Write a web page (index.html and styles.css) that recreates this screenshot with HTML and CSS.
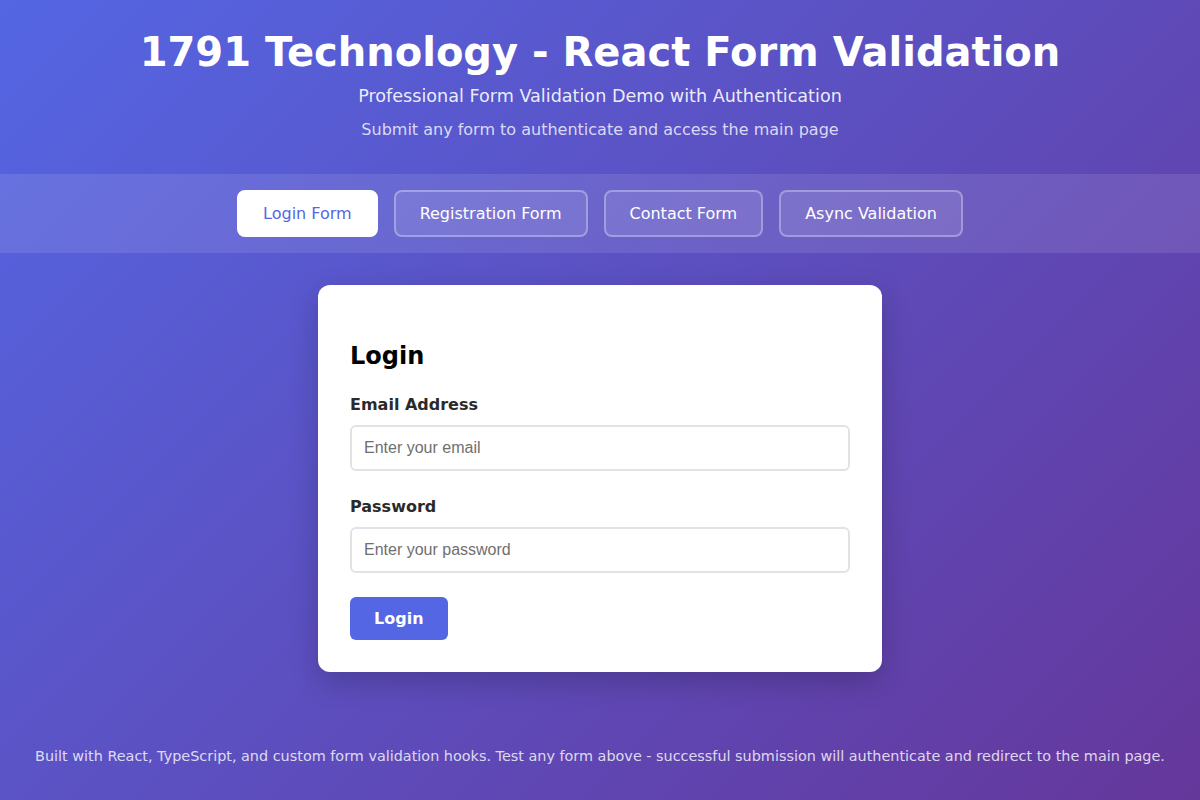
FILE: index.html
```html
<!DOCTYPE html>
<html lang="en">
<head>
<meta charset="utf-8">
<title>1791 Technology - React Form Validation</title>
<link rel="stylesheet" href="styles.css">
</head>
<body>
<div class="app">
  <header class="header">
    <h1 class="title">1791 Technology - React Form Validation</h1>
    <p class="subtitle">Professional Form Validation Demo with Authentication</p>
    <p class="hint">Submit any form to authenticate and access the main page</p>
  </header>
  <nav class="tabs">
    <button class="tab active">Login Form</button>
    <button class="tab">Registration Form</button>
    <button class="tab">Contact Form</button>
    <button class="tab">Async Validation</button>
  </nav>
  <main class="main">
    <form class="card">
      <h2 class="card-title">Login</h2>
      <div class="field">
        <label class="label" for="email">Email Address</label>
        <input class="input" id="email" type="email" placeholder="Enter your email">
      </div>
      <div class="field">
        <label class="label" for="password">Password</label>
        <input class="input" id="password" type="password" placeholder="Enter your password">
      </div>
      <button class="submit" type="button">Login</button>
    </form>
  </main>
  <footer class="footer">
    Built with React, TypeScript, and custom form validation hooks. Test any form above - successful submission will authenticate and redirect to the main page.
  </footer>
</div>
</body>
</html>
```
FILE: styles.css
```css
* { box-sizing: border-box; }
html, body { margin: 0; padding: 0; }
body {
  font-family: "DejaVu Sans", sans-serif;
  background: linear-gradient(135deg, #5466e3 0%, #65379b 100%);
  min-height: 100vh;
  color: #fff;
}
.app {
  min-height: 100vh;
  display: flex;
  flex-direction: column;
}
.header {
  text-align: center;
  padding: 29px 20px 35px;
}
.title {
  margin: 0 0 11px;
  font-size: 40px;
  font-weight: bold;
  line-height: normal;
  color: #fff;
}
.subtitle {
  margin: 0 0 14px;
  font-size: 17.6px;
  color: rgba(255, 255, 255, 0.9);
}
.hint {
  margin: 0;
  font-size: 16px;
  color: rgba(255, 255, 255, 0.78);
}
.tabs {
  display: flex;
  justify-content: center;
  gap: 16px;
  padding: 16px;
  background: rgba(255, 255, 255, 0.1);
}
.tab {
  font-family: "DejaVu Sans", sans-serif;
  font-size: 16px;
  line-height: normal;
  padding: 12px 24px;
  border: 2px solid rgba(255, 255, 255, 0.3);
  border-radius: 8px;
  background: rgba(255, 255, 255, 0.1);
  color: #fff;
  cursor: pointer;
}
.tab.active {
  background: #fff;
  border-color: #fff;
  color: #5466e3;
}
.main {
  flex: 1;
  padding: 32px 20px;
  display: flex;
  justify-content: center;
  align-items: flex-start;
}
.card {
  width: 564px;
  background: #fff;
  border-radius: 12px;
  padding: 32px;
  box-shadow: 0 10px 30px rgba(0, 0, 0, 0.2);
  color: #000;
}
.card-title {
  margin: 25px 0 25px;
  font-size: 24px;
  font-weight: bold;
  line-height: normal;
  color: #000;
}
.field {
  margin-bottom: 26px;
}
.field:last-of-type {
  margin-bottom: 24px;
}
.label {
  display: block;
  margin-bottom: 11px;
  font-size: 16px;
  font-weight: bold;
  color: #2a2a2a;
}
.input {
  display: block;
  width: 100%;
  padding: 12px;
  border: 2px solid #dfe3e8;
  border-radius: 6px;
  font-family: "Liberation Sans", Arial, sans-serif;
  font-size: 16px;
  color: #333;
  background: #fff;
}
.input::placeholder {
  color: #6f6f6f;
}
.submit {
  font-family: "DejaVu Sans", sans-serif;
  font-size: 16px;
  font-weight: bold;
  line-height: 19px;
  padding: 12px 24px;
  border: none;
  border-radius: 6px;
  background: #5466e3;
  color: #fff;
  cursor: pointer;
}
.footer {
  text-align: center;
  padding: 32px 20px;
  font-size: 14.4px;
  line-height: 1.6;
  color: rgba(255, 255, 255, 0.8);
}
```
